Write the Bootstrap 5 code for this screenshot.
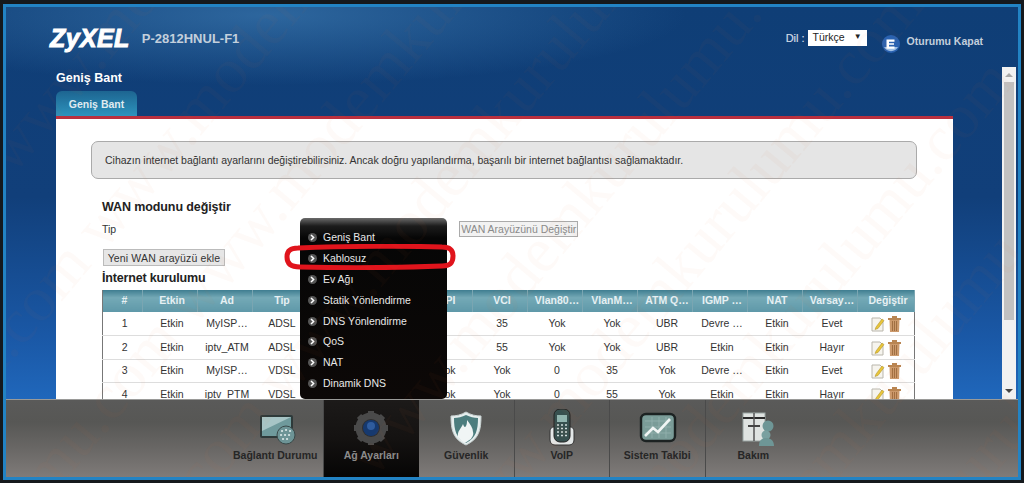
<!DOCTYPE html>
<html lang="tr">
<head>
    <meta charset="UTF-8">
    <title>P-2812HNUL-F1</title>
    <link href="https://cdn.jsdelivr.net/npm/bootstrap@5.3.2/dist/css/bootstrap.min.css" rel="stylesheet">
    <style>
        html, body { height: 483px; overflow: hidden; }
        body { background: #15191d; font-family: "Liberation Sans", Arial, sans-serif; font-size: 10.5px; color: #333; }
        .zy-frame {
            height: 476px; margin: 4px 3px 0; border: 3px solid #2283c4; overflow: hidden;
            background:
                radial-gradient(ellipse 420px 70px at 260px 8px, rgba(70,135,190,.55), transparent),
                linear-gradient(180deg, #0f3e76 0, #113f7a 190px, #1a58a6 330px, #2067bb 392px);
        }
        .zy-head { height: 60px; padding: 15px 35px 0 44px; }
        .zy-logo { font-size: 25px; font-weight: 700; font-style: italic; color: #fff; line-height: 30px; margin-top: 1px; -webkit-text-stroke: 1px #fff; letter-spacing: .4px; }
        .zy-model { font-size: 13px; font-weight: 700; color: #c3cfdc; margin-left: 12px; line-height: 30px; padding-top: 2px; }
        .zy-dil { font-size: 11px; font-weight: 400; color: #d3dce6; margin: 8px 3px 0 0; -webkit-text-stroke: .2px #d3dce6; }
        .zy-lang { width: 59px; height: 16px; margin-top: 8px; background: #fff; color: #222; font-size: 10.5px; line-height: 14px; padding: 0 5px; }
        .zy-lang i { font-style: normal; font-size: 8px; }
        .zy-exit { margin: 13px 7px 0 15px; }
        .zy-out { font-size: 10.5px; font-weight: 700; color: #c3cfdc; margin-top: 12px; }
        .zy-main { height: 332px; }
        .zy-col { width: 897px; margin-left: 50px; }
        .zy-title { font-size: 12.5px; font-weight: 700; color: #fff; height: 24px; padding-top: 4px; line-height: 15px; }
        .zy-tab { width: 81px; height: 25px; font-size: 10.5px; font-weight: 700; color: #dfeaf0; line-height: 26px; text-align: center; border-radius: 6px 6px 0 0; background: linear-gradient(180deg, #1d6591, #2d93bd); }
        .zy-panel { flex: 1; background: #fff; border-top: 3px solid #b9303f; padding: 22px 36px 0 35px; overflow: hidden; min-height: 0; }
        .zy-info { height: 38px; background: #e5e5e5; border: 1px solid #aaa; border-radius: 7px; padding-left: 13px; line-height: 36px; color: #333; letter-spacing: -.02px; }
        .zy-body { padding-left: 11px; }
        .zy-h { font-size: 12.5px; font-weight: 700; color: #222; line-height: 16px; letter-spacing: -.1px; }
        .zy-h-wan { margin-top: 20px; }
        .zy-h-net { margin-top: 4px; letter-spacing: -.17px; }
        .zy-tip { margin-top: 6px; line-height: 16px; }
        .zy-add { margin-top: 12px; line-height: 0; }
        .zy-btn { display: inline-block; border: 1px solid #bbb; background: #e6e6e6; color: #333; font-size: 10.5px; line-height: 14px; height: 17px; padding: 0; border-radius: 0; text-align: center; }
        .zy-btn-off { color: #8a8a8a; height: 16px; width: 119px; margin-left: 343px; background: #f2f2f2; border-color: #aaa; white-space: nowrap; }
        .zy-btn-add { letter-spacing: .15px; width: 122px; margin-left: 1px; }
        .table.zy-table { width: 813px; table-layout: fixed; margin: 4px 0 0; border-left: 1px solid #777; border-right: 1px solid #777; font-size: 10.5px; }
        .table.zy-table > thead > tr > th {
            height: 22px; padding: 0 0 0 4px; color: #e6f0f3; font-size: 10.5px; font-weight: 700; text-align: center; vertical-align: middle;
            border: 0; border-right: 1px solid #7aa6b2; white-space: nowrap;
            background: linear-gradient(180deg, #3f7d90 0, #74a9b6 35%, #5e98a8 100%); box-shadow: none;
        }
        .table.zy-table > tbody > tr > td { height: 23.6px; padding: 0 0 0 4px; color: #333; text-align: center; vertical-align: middle; border-bottom: 1px solid #ddd; white-space: nowrap; }
        .table.zy-table > tbody > tr > td:last-child { padding-left: 0; }
        .zy-menu { position: absolute; left: 294px; top: 151px; width: 147px; height: 181px; background: linear-gradient(180deg, #6a6a6a 0, #1c1c1c 8px, #060606 20px, #0c0807 100%); border-radius: 5px; padding-top: 9px; z-index: 3; }
        .zy-menu li { height: 20.9px; color: #e8e8e8; font-size: 10.5px; line-height: 21px; padding-left: 8px; gap: 6px; }
        .zy-ring { position: absolute; left: 278px; top: 177px; z-index: 4; }
        .zy-scroll { width: 14px; margin-left: 49px; background: #f1f1f1; padding: 15px 0 0 2px; }
        .zy-thumb { width: 10px; height: 238px; background: #c1c1c1; }
        .zy-arrow-up, .zy-arrow-down { position: absolute; left: 3px; width: 0; height: 0; border-left: 4px solid transparent; border-right: 4px solid transparent; }
        .zy-arrow-up { top: 6px; border-bottom: 4px solid #a8a8a8; }
        .zy-arrow-down { bottom: 6px; border-top: 4px solid #444; }
        .zy-bar { height: 78px; padding-left: 222px; border-top: 1px solid #9a9a98; background: linear-gradient(180deg, #5a5a59 0, #575755 22px, #6a6866 50px, #7f7b79 100%); position: relative; z-index: 5; }
        .zy-item { width: 95.5px; height: 77px; padding-top: 9px; color: #262626; font-size: 10.5px; font-weight: 700; border-right: 1px solid #4a4a4a; }
        .zy-item svg { height: 38px; width: 44px; }
        .zy-item span { line-height: 14px; margin-top: 1px; }
        .zy-item-on { background: linear-gradient(180deg, #1c1a19 0, #141211 50%, #060505 100%); color: #8b8b8b; border-right: 0; }
        .zy-item-end { border-right: 0; }
        .zy-mark { position: absolute; left: -200px; top: -360px; width: 1500px; transform: rotate(-50deg); transform-origin: 50% 50%; z-index: 6; pointer-events: none; font-family: "Liberation Serif", serif; font-size: 64px; line-height: 118px; white-space: nowrap; color: rgba(226, 120, 50, .035); }
    </style>
</head>
<body>
<div class="zy-frame d-flex flex-column position-relative">

    <div class="zy-head d-flex">
        <div class="zy-logo">ZyXEL</div>
        <div class="zy-model">P-2812HNUL-F1</div>
        <div class="ms-auto d-flex align-items-start">
            <span class="zy-dil">Dil :</span>
            <div class="zy-lang d-flex justify-content-between">Türkçe <i>▼</i></div>
            <svg class="zy-exit" width="18" height="18" viewBox="0 0 18 18">
                <circle cx="9" cy="9" r="9" fill="#2a62b0"/>
                <path d="M2 12a8 8 0 0 0 14 0z" fill="#9fc0e6"/>
                <path d="M4.5 4.5h8v2.2H7v1.5h5v1.6H7v1.7h5.5v2.2h-8z" fill="#fff"/>
            </svg>
            <span class="zy-out">Oturumu Kapat</span>
        </div>
    </div>

    <div class="zy-main d-flex position-relative">
        <div class="zy-col d-flex flex-column">
            <div class="zy-title">Geniş Bant</div>
            <div class="zy-tab">Geniş Bant</div>
            <div class="zy-panel">
                <div class="zy-info">Cihazın internet bağlantı ayarlarını değiştirebilirsiniz. Ancak doğru yapılandırma, başarılı bir internet bağlantısı sağlamaktadır.</div>
                <div class="zy-body">
                    <div class="zy-h zy-h-wan">WAN modunu değiştir</div>
                    <div class="zy-tip d-flex">Tip <button class="zy-btn zy-btn-off" type="button">WAN Arayüzünü Değiştir</button></div>
                    <div class="zy-add"><button class="zy-btn zy-btn-add" type="button">Yeni WAN arayüzü ekle</button></div>
                    <div class="zy-h zy-h-net">İnternet kurulumu</div>
                    <table class="table zy-table">
                        <colgroup>
                            <col style="width:40px"><col span="13" style="width:55px"><col>
                        </colgroup>
                        <thead>
                        <tr><th>#</th><th>Etkin</th><th>Ad</th><th>Tip</th><th></th><th></th><th>VPI</th><th>VCI</th><th>Vlan80…</th><th>VlanM…</th><th>ATM Q…</th><th>IGMP …</th><th>NAT</th><th>Varsay…</th><th>Değiştir</th></tr>
                        </thead>
                        <tbody id="wanRows"></tbody>
                    </table>
                </div>
            </div>
        </div>
        <div class="zy-scroll position-relative">
            <div class="zy-arrow-up"></div>
            <div class="zy-thumb"></div>
            <div class="zy-arrow-down"></div>
        </div>

        <ul class="zy-menu list-unstyled m-0" id="subMenu"></ul>
        <svg class="zy-ring" width="172" height="26" viewBox="0 0 172 26">
            <path d="M14 4C60 2 130 2 158 3c8 0 11 3 11 9 0 7-3 10-11 10-50 2-100 2-142 1C6 23 3 19 3 13 3 7 6 4 14 4z" fill="none" stroke="#e0141c" stroke-width="5"/>
        </svg>
    </div>

    <div class="zy-bar d-flex">
        <div class="zy-item d-flex flex-column align-items-center">
            <svg viewBox="-2 0 44 38">
                <rect x="5" y="6" width="33" height="23" rx="2" fill="#2e3a3a"/>
                <path d="M7 8h29v19H7z" fill="#6f9a9c"/>
                <path d="M7 8h29L7 22z" fill="#a7c5c6"/>
                <circle cx="31" cy="26" r="9" fill="#6d9496" stroke="#3a4a4a"/>
                <path d="M27 22h.1M31 21h.1M35 22h.1M26 26h.1M30 26h.1M34 26h.1M28 30h.1M32 30h.1" stroke="#d5e4e4" stroke-width="2.2" stroke-linecap="round"/>
            </svg>
            <span>Bağlantı Durumu</span>
        </div>
        <div class="zy-item zy-item-on d-flex flex-column align-items-center">
            <svg viewBox="0 0 44 38">
                <path d="M22 2v34M5 19h34M10 7l24 24M34 7 10 31" stroke="#4a4a4a" stroke-width="6"/>
                <circle cx="22" cy="19" r="12" fill="none" stroke="#4a4a4a" stroke-width="7"/>
                <circle cx="22" cy="19" r="9" fill="#302f2f"/>
                <circle cx="22" cy="19" r="8" fill="#16396f"/>
                <circle cx="22" cy="17" r="4" fill="#2f5c9e"/>
            </svg>
            <span>Ağ Ayarları</span>
        </div>
        <div class="zy-item d-flex flex-column align-items-center">
            <svg viewBox="0 0 44 38">
                <path d="M22 3c5 3 10 4 15 4 0 14-2 23-15 29C9 30 7 21 7 7c5 0 10-1 15-4z" fill="#e6eeee" stroke="#c8d2d2"/>
                <path d="M22 6c4 2 8 3 12 3 0 12-2 20-12 25C12 29 10 21 10 9c4 0 8-1 12-3z" fill="#4c7d7e"/>
                <path d="M14 28c-1-6 3-8 5-13 1 3 2 4 3 2 1-2 1-4 1-6 3 4 6 8 6 12 1 3-1 5-2 7-3 2-5 3-6 4-2-1-5-3-7-6z" fill="#f0f5f5"/>
            </svg>
            <span>Güvenlik</span>
        </div>
        <div class="zy-item d-flex flex-column align-items-center">
            <svg viewBox="0 1 44 38">
                <path d="M10 24c0-4 2-5 4-5h16c2 0 4 1 4 5v8c0 3-2 5-5 5H15c-3 0-5-2-5-5z" fill="#e4e8e8" stroke="#333"/>
                <rect x="14" y="1" width="16" height="33" rx="6" fill="#37504f" stroke="#222"/>
                <rect x="17" y="7" width="10" height="7" fill="#90b4ae"/>
                <path d="M17 17h10M17 20.5h10M17 24h10M17 27.5h10" stroke="#cfdcdc" stroke-width="1.6" stroke-dasharray="2 2"/>
            </svg>
            <span>VoIP</span>
        </div>
        <div class="zy-item d-flex flex-column align-items-center">
            <svg viewBox="-1 0 44 38">
                <rect x="5" y="5" width="34" height="27" rx="5" fill="#7a9c98" stroke="#1c2222" stroke-width="2.4"/>
                <path d="M9 12h26M9 18h26M9 24h26M16 8v21M23 8v21M30 8v21" stroke="#96b3af" stroke-width=".8"/>
                <path d="M9 27l8-8 5 4 12-13" fill="none" stroke="#f0f5f4" stroke-width="2.6"/>
            </svg>
            <span>Sistem Takibi</span>
        </div>
        <div class="zy-item zy-item-end d-flex flex-column align-items-center">
            <svg viewBox="-5 0 44 38">
                <rect x="7" y="4" width="22" height="28" fill="#dfe3e1" stroke="#9aa5a3"/>
                <path d="M7 9h22" stroke="#2b2b2b" stroke-width="2"/>
                <path d="M18 4v28" stroke="#555" stroke-width="1.5"/>
                <rect x="12" y="16" width="12" height="2" fill="#444"/>
                <circle cx="32" cy="17" r="5.5" fill="#6e9696"/>
                <circle cx="30" cy="26" r="4.5" fill="#7aa0a0"/>
                <path d="M23 37c0-6 3-8 7-8s8 2 8 8z" fill="#6e9696"/>
            </svg>
            <span>Bakım</span>
        </div>
    </div>

    <div class="zy-mark" aria-hidden="true" id="markLayer"></div>
</div>

<script>
    // columns 5 and 6 sit fully under the open menu, so they stay empty
    const rows = [
        ['1', 'Etkin', 'MyISP…', 'ADSL', '', '', '', '35', 'Yok', 'Yok', 'UBR', 'Devre …', 'Etkin', 'Evet'],
        ['2', 'Etkin', 'iptv_ATM', 'ADSL', '', '', '', '55', 'Yok', 'Yok', 'UBR', 'Etkin', 'Etkin', 'Hayır'],
        ['3', 'Etkin', 'MyISP…', 'VDSL', '', '', 'Yok', 'Yok', '0', '35', 'Yok', 'Devre …', 'Etkin', 'Evet'],
        ['4', 'Etkin', 'iptv_PTM', 'VDSL', '', '', 'Yok', 'Yok', '0', '55', 'Yok', 'Etkin', 'Etkin', 'Hayır']
    ];
    const editIcons = `
        <svg width="14" height="16" viewBox="0 0 14 16">
            <path d="M1 2h8l3 3v10H1z" fill="#f6f4ee" stroke="#b9b6ac"/>
            <path d="M5 11l6-8 2 1.5-6 8-3 1z" fill="#e8c53a" stroke="#a98a22" stroke-width=".5"/>
        </svg>
        <svg width="13" height="16" viewBox="0 0 13 16">
            <path d="M0 2h13v2H0zM4 0h5v2H4z" fill="#b98552"/>
            <path d="M1.5 4h10L11 16H2z" fill="#cc9a6c"/>
            <path d="M4.5 5v10M6.5 5v10M8.5 5v10" stroke="#a06f42"/>
        </svg>`;
    document.getElementById('wanRows').innerHTML = rows.map(r =>
        '<tr>' + r.map(c => `<td>${c}</td>`).join('') + `<td>${editIcons}</td></tr>`
    ).join('');

    const menuItems = ['Geniş Bant', 'Kablosuz', 'Ev Ağı', 'Statik Yönlendirme', 'DNS Yönlendirme', 'QoS', 'NAT', 'Dinamik DNS'];
    document.getElementById('subMenu').innerHTML = menuItems.map(m => `
        <li class="d-flex align-items-center">
            <svg width="9" height="9" viewBox="0 0 9 9">
                <circle cx="4.5" cy="4.5" r="4.5" fill="#555"/>
                <path d="M3 2l2.6 2.5L3 7" fill="none" stroke="#fff" stroke-width="1.5"/>
            </svg>${m}
        </li>`).join('');

    // faint site watermark laid over the whole screenshot
    document.getElementById('markLayer').innerHTML =
        Array(13).fill('modemkurulumu.com www.modemkurulumu.com').join('<br>');
</script>
<script src="https://cdn.jsdelivr.net/npm/bootstrap@5.3.2/dist/js/bootstrap.bundle.min.js"></script>
</body>
</html>
